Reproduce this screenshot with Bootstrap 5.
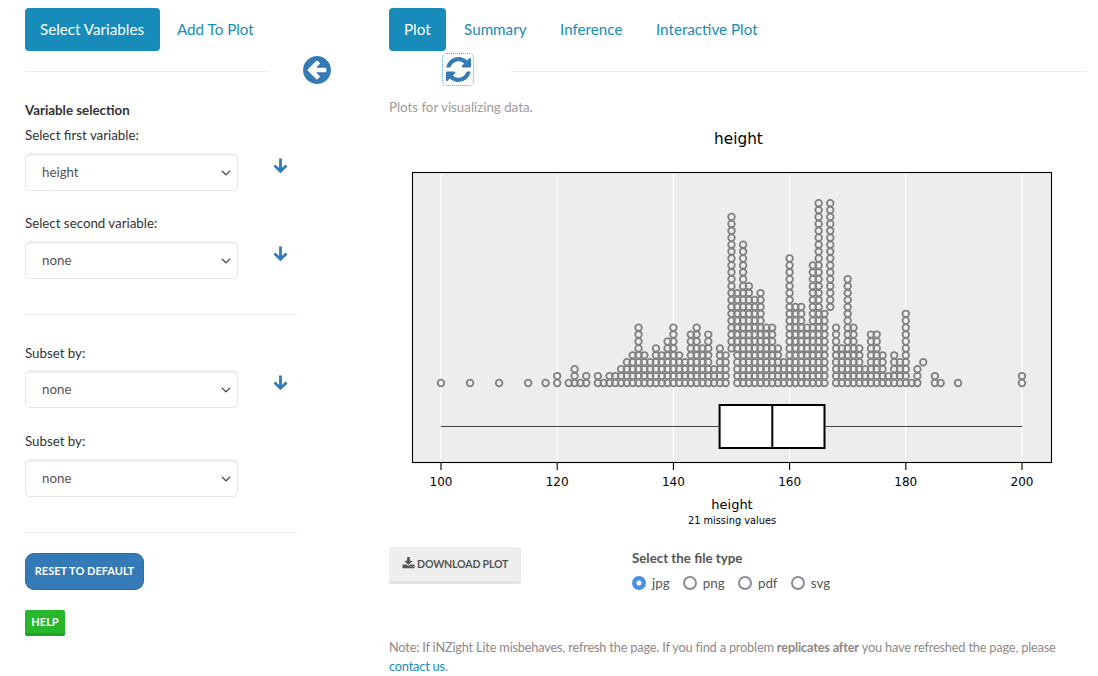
<!DOCTYPE html>
<html lang="en">

<head>
	<meta charset="utf-8">
	<meta name="viewport" content="width=device-width, initial-scale=1">
	<title>iNZight Lite</title>
	<link href="https://cdn.jsdelivr.net/npm/bootstrap@5.3.3/dist/css/bootstrap.min.css" rel="stylesheet">
	<script src="https://cdn.jsdelivr.net/npm/bootstrap@5.3.3/dist/js/bootstrap.bundle.min.js"></script>

	<style>
		body {
			font-family: "Lato", "Liberation Sans", sans-serif;
			font-size: 13.3px;
			color: #333;
			background: #fff;
			overflow: hidden;
		}

		/* page columns */
		.page-wrap {
			height: 676px;
			padding-left: 25px;
		}

		.side-col {
			width: 273px;
			flex: none;
		}

		.arrow-col {
			width: 91px;
			flex: none;
			padding: 56px 0 0 5px;
		}

		.main-col {
			width: 698px;
			flex: none;
		}

		/* tabs */
		.tab-bar {
			padding-top: 8px;
			gap: 2px;
		}

		.tab-bar .nav-link {
			height: 43px;
			padding: 11px 15px;
			font-size: 15.2px;
			line-height: 21px;
			color: #178cba;
			border-radius: 4px;
		}

		.tab-bar .nav-link.active {
			background: #178cba;
			color: #fff;
		}

		.side-col .tab-bar .nav-link.active {
			width: 135px;
		}

		.main-col .tab-bar .nav-item+.nav-item {
			margin-left: 1.5px;
		}

		.rule-line {
			border: 0;
			border-top: 1px solid #eee;
			opacity: 1;
			margin: 0;
		}

		.tab-rule {
			width: 244px;
			margin-top: 20px;
		}

		.side-rule {
			width: 273px;
			margin-top: 35px;
		}

		/* sidebar fields */
		.var-title {
			font-weight: 700;
			margin: 29px 0 6px;
			line-height: 19px;
		}

		.var-label {
			display: block;
			line-height: 19px;
			margin: 0 0 8px;
		}

		.var-gap {
			margin-top: 23px;
		}

		.var-gap-wide {
			margin-top: 29px;
			margin-bottom: 7px;
		}

		.var-gap-after {
			margin-top: 24px;
		}

		.var-row {
			height: 38px;
		}

		.var-select {
			width: 213px;
			height: 38px;
			padding: 6px 36px 6px 16px;
			font-size: 13.3px;
			color: #555;
			border: 1px solid #e5e5e5;
			border-top: 3px solid #eee;
			border-radius: 5px;
			background-position: right 5px center;
			background-size: 12px 10px;
			flex: none;
		}

		.down-icon {
			width: 15px;
			height: 15px;
			fill: none;
			stroke: #337ab7;
			stroke-width: 2.8;
			margin-left: 34.5px;
			margin-top: -14px;
		}

		.btn-reset {
			width: 119px;
			height: 37px;
			padding: 0;
			font-size: 11px;
			font-weight: 700;
			color: #fff;
			background: #337ab7;
			border: 1px solid #2e6da4;
			border-radius: 9px;
			text-transform: uppercase;
		}

		.btn-help {
			width: 40px;
			height: 26px;
			padding: 1px 0 0;
			font-size: 11px;
			font-weight: 700;
			color: #fff;
			background: #28b62c;
			border: 0;
			border-bottom: 3px solid #23a127;
			border-radius: 2px;
			text-transform: uppercase;
		}

		/* main column */
		.refresh-wrap {
			height: 33px;
			margin-top: 2px;
		}

		.refresh-box {
			width: 32px;
			height: 33px;
			margin-left: 53px;
			border: 1px dotted #6c9fd0;
			border-radius: 5px;
			flex: none;
		}

		.refresh-box svg {
			width: 25px;
			height: 25px;
			fill: #337ab7;
		}

		.refresh-rule {
			margin-left: 36px;
			margin-top: 18px;
		}

		.plot-note {
			color: #a09a96;
			margin: 12px 0 0;
			line-height: 19px;
		}

		.plot-box {
			display: block;
			width: 698px;
			height: 410px;
			margin-top: 8px;
		}

		.plot-box text {
			font-family: "DejaVu Sans", sans-serif;
			fill: #000;
		}

		.download-row {
			height: 91px;
			margin-top: 12px;
		}

		.btn-download {
			width: 132px;
			height: 37px;
			padding: 1px 0 0;
			font-size: 10.6px;
			letter-spacing: -0.2px;
			font-weight: 700;
			color: #555;
			background: #eee;
			border: 0;
			border-bottom: 3px solid #e2e2e2;
			border-radius: 3px;
			text-transform: uppercase;
			flex: none;
		}

		.btn-download svg {
			width: 13px;
			height: 13px;
			fill: #555;
			vertical-align: -2px;
		}

		.type-box {
			margin-left: 111px;
			padding-top: 2px;
		}

		.type-title {
			font-weight: 700;
			color: #555;
			line-height: 19px;
			margin-bottom: 5px;
		}

		.type-box .form-check {
			min-height: 0;
			padding-left: 0;
			margin: 0 13.3px 0 0;
			color: #555;
			line-height: 20px;
		}

		.type-box .form-check-input {
			float: none;
			width: 14px;
			height: 14px;
			margin: 0 6px 0 0;
			vertical-align: -2px;
			border: 2px solid #8a8a9a;
			background-color: #fff;
		}

		.type-box .form-check-input:checked {
			border-color: #4a8fe0;
			background-color: #4a8fe0;
		}

		.foot-note {
			color: #8f8986;
			font-size: 12.8px;
			letter-spacing: -0.2px;
			line-height: 19px;
			margin: 0;
		}

		.foot-note a {
			color: #178cba;
			text-decoration: none;
		}
	</style>
</head>

<body>
	<div class="page-wrap d-flex">

		<!-- Left column -->
		<div class="side-col">
			<ul class="nav nav-pills tab-bar">
				<li class="nav-item"><a class="nav-link active" href="#">Select Variables</a></li>
				<li class="nav-item"><a class="nav-link" href="#">Add To Plot</a></li>
			</ul>
			<hr class="rule-line tab-rule">

			<p class="var-title">Variable selection</p>
			<label class="var-label">Select first variable:</label>
			<div class="var-row d-flex align-items-center">
				<select class="form-select var-select"><option>height</option></select>
				<svg class="down-icon" viewBox="0 0 15 15"><path d="M7.500 0.500V13M1.500 7.500L7.500 13.300L13.500 7.500"/></svg>
			</div>

			<label class="var-label var-gap">Select second variable:</label>
			<div class="var-row d-flex align-items-center">
				<select class="form-select var-select"><option>none</option></select>
				<svg class="down-icon" viewBox="0 0 15 15"><path d="M7.500 0.500V13M1.500 7.500L7.500 13.300L13.500 7.500"/></svg>
			</div>

			<hr class="rule-line side-rule">

			<label class="var-label var-gap-wide">Subset by:</label>
			<div class="var-row d-flex align-items-center">
				<select class="form-select var-select"><option>none</option></select>
				<svg class="down-icon" viewBox="0 0 15 15"><path d="M7.500 0.500V13M1.500 7.500L7.500 13.300L13.500 7.500"/></svg>
			</div>

			<label class="var-label var-gap-after">Subset by:</label>
			<div class="var-row">
				<select class="form-select var-select"><option>none</option></select>
			</div>

			<hr class="rule-line side-rule">

			<div class="mt-3 pt-1"><button type="button" class="btn btn-reset">Reset to default</button></div>
			<div class="mt-3 pt-1"><button type="button" class="btn btn-help">Help</button></div>
		</div>

		<!-- Back arrow between the columns -->
		<div class="arrow-col">
			<svg width="28" height="28" viewBox="128 128 1536 1536" fill="#337ab7"><path d="M1408 960v-128q0-26-19-45t-45-19h-502l189-189q19-19 19-45t-19-45l-91-91q-18-18-45-18t-45 18l-362 362-91 91q-18 18-18 45t18 45l91 91 362 362q18 18 45 18t45-18l91-91q18-18 18-45t-18-45l-189-189h502q26 0 45-19t19-45zm256-64q0 209-103 385.500t-279.500 279.500-385.500 103-385.500-103-279.500-279.500-103-385.500 103-385.500 279.500-279.500 385.500-103 385.500 103 279.500 279.500 103 385.500z"/></svg>
		</div>

		<!-- Right column -->
		<div class="main-col">
			<ul class="nav nav-pills tab-bar">
				<li class="nav-item"><a class="nav-link active" href="#">Plot</a></li>
				<li class="nav-item"><a class="nav-link" href="#">Summary</a></li>
				<li class="nav-item"><a class="nav-link" href="#">Inference</a></li>
				<li class="nav-item"><a class="nav-link" href="#">Interactive Plot</a></li>
			</ul>
			<div class="refresh-wrap d-flex">
				<div class="refresh-box d-flex align-items-center justify-content-center">
					<svg viewBox="128 128 1536 1536"><path d="M1639 1056q0 5-1 7-64 268-268 434.500t-478 166.500q-146 0-282.500-55t-243.500-157l-129 129q-19 19-45 19t-45-19-19-45v-448q0-26 19-45t45-19h448q26 0 45 19t19 45-19 45l-137 137q71 66 161 102t187 36q134 0 250-65t186-179q11-17 53-117 8-23 30-23h192q13 0 22.500 9.500t9.500 22.500zm25-800v448q0 26-19 45t-45 19h-448q-26 0-45-19t-19-45 19-45l138-138q-148-137-349-137-134 0-250 65t-186 179q-11 17-53 117-8 23-30 23h-199q-13 0-22.500-9.500t-9.500-22.500v-7q65-268 270-434.500t480-166.500q146 0 284 55.500t245 156.500l130-129q19-19 45-19t45 19 19 45z"/></svg>
				</div>
				<hr class="rule-line refresh-rule flex-grow-1">
			</div>
			<p class="plot-note">Plots for visualizing data.</p>

			<!-- viewBox uses page coordinates so values can be read off the screenshot -->
			<svg class="plot-box" viewBox="389 125 698 410">
				<text x="738.500" y="144" font-size="15.300" text-anchor="middle">height</text>
				<rect x="412" y="172" width="640" height="291" fill="#ededed"/>
				<g id="gridLines" stroke="#fff" stroke-width="1.100"></g>
				<g id="dotLayer" fill="none" stroke="#808080" stroke-width="1.800"></g>
				<line x1="441" y1="426.500" x2="1022" y2="426.500" stroke="#444" stroke-width="1"/>
				<rect x="719.600" y="405" width="104.900" height="43" fill="#fff" stroke="#000" stroke-width="2"/>
				<line x1="772.300" y1="405" x2="772.300" y2="448" stroke="#000" stroke-width="2"/>
				<rect x="412.500" y="172.500" width="639" height="290" fill="none" stroke="#000" stroke-width="1.100"/>
				<g id="axisLayer" stroke="#000" stroke-width="1.100"></g>
				<g font-size="12" text-anchor="middle">
					<text x="441" y="486">100</text>
					<text x="557.200" y="486">120</text>
					<text x="673.400" y="486">140</text>
					<text x="789.600" y="486">160</text>
					<text x="905.800" y="486">180</text>
					<text x="1022" y="486">200</text>
				</g>
				<text x="732" y="509" font-size="13" text-anchor="middle">height</text>
				<text x="732" y="524" font-size="9.800" text-anchor="middle">21 missing values</text>
			</svg>

			<div class="download-row d-flex">
				<button type="button" class="btn btn-download">
					<svg viewBox="0 0 1792 1792"><path d="M1344 1344q0-26-19-45t-45-19-45 19-19 45 19 45 45 19 45-19 19-45zm256 0q0-26-19-45t-45-19-45 19-19 45 19 45 45 19 45-19 19-45zm128-224v320q0 40-28 68t-68 28h-1472q-40 0-68-28t-28-68v-320q0-40 28-68t68-28h465l135 136q58 56 136 56t136-56l136-136h464q40 0 68 28t28 68zm-325-569q17 41-14 70l-448 448q-18 19-45 19t-45-19l-448-448q-31-29-14-70 17-39 59-39h256v-448q0-26 19-45t45-19h256q26 0 45 19t19 45v448h256q42 0 59 39z"/></svg>
					Download Plot
				</button>
				<div class="type-box">
					<div class="type-title">Select the file type</div>
					<div class="d-flex">
						<div class="form-check"><input class="form-check-input" type="radio" name="fileType" id="ftJpg" checked><label for="ftJpg">jpg</label></div>
						<div class="form-check"><input class="form-check-input" type="radio" name="fileType" id="ftPng"><label for="ftPng">png</label></div>
						<div class="form-check"><input class="form-check-input" type="radio" name="fileType" id="ftPdf"><label for="ftPdf">pdf</label></div>
						<div class="form-check"><input class="form-check-input" type="radio" name="fileType" id="ftSvg"><label for="ftSvg">svg</label></div>
					</div>
				</div>
			</div>

			<p class="foot-note">Note: If iNZight Lite misbehaves, refresh the page. If you find a problem <b>replicates after</b> you have refreshed the page, please <a href="#">contact us</a>.</p>
		</div>
	</div>

	<script>
		var svgNS = "http://www.w3.org/2000/svg";

		// value: top stack level, or [lowest, top] for stacks that float above the base
		var stacks = {
			100: 1, 105: 1, 110: 1, 115: 1, 118: 1, 120: 2, 122: 1, 123: 3, 124: 1, 125: 2,
			127: 2, 128: 1, 129: 2, 130: 2, 131: 3, 132: 4, 133: 5, 134: 9, 135: 5, 136: 4,
			137: 6, 138: 5, 139: 7, 140: 9, 141: 5, 142: 4, 143: 8, 144: 9, 145: 6, 146: 8,
			147: 3, 148: 6, 149: 5, 150: [6, 25], 151: 14, 152: 21, 153: 15, 154: 13, 155: 14,
			156: 9, 157: 9, 158: 6, 159: 4, 160: 19, 161: 12, 162: 12, 163: 9, 164: 18,
			165: 27, 166: 11, 167: [12, 27], 168: 9, 169: 6, 170: 16, 171: 9, 172: 6, 173: 3,
			174: 8, 175: 8, 176: 5, 177: 2, 178: 5, 179: 4, 180: 11, 181: 1, 182: 3,
			183: [4, 4], 185: 2, 186: 1, 189: 1, 200: 2
		};

		function xFor(v) {
			return 441 + (v - 100) * 5.81;
		}

		function addEl(parent, tag, attrs) {
			var el = document.createElementNS(svgNS, tag);
			for (var k in attrs) {
				el.setAttribute(k, attrs[k]);
			}
			parent.appendChild(el);
		}

		var dotLayer = document.getElementById("dotLayer");
		Object.keys(stacks).forEach(function (v) {
			var s = stacks[v];
			var low = Array.isArray(s) ? s[0] : 1;
			var top = Array.isArray(s) ? s[1] : s;
			for (var i = low; i <= top; i++) {
				addEl(dotLayer, "circle", { cx: xFor(+v), cy: 383 - (i - 1) * 6.917, r: 3.3 });
			}
		});

		[100, 120, 140, 160, 180, 200].forEach(function (v) {
			addEl(document.getElementById("gridLines"), "line", { x1: xFor(v), x2: xFor(v), y1: 172, y2: 463 });
			addEl(document.getElementById("axisLayer"), "line", { x1: xFor(v), x2: xFor(v), y1: 463, y2: 470 });
		});
	</script>
</body>

</html>
